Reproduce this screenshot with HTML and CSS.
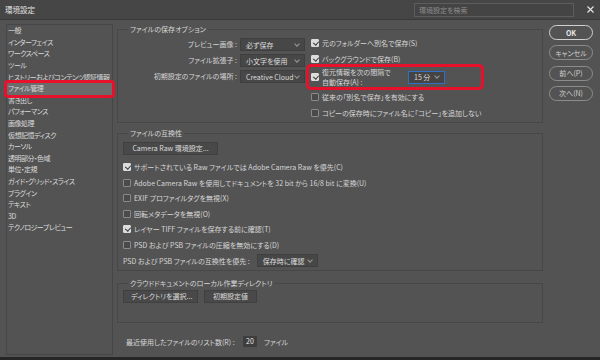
FILE: index.html
```html
<!DOCTYPE html>
<html lang="ja">
<head>
  <meta charset="UTF-8">
  <title>環境設定</title>
  <link rel="stylesheet" href="styles.css">
</head>
<body>
<div class="window">
  <div class="titlebar">
    <span class="title">環境設定</span>
    <div class="search">環境設定を検索</div>
    <svg class="close" width="7" height="7" viewBox="0 0 7 7"><path d="M0.5 0.5L6.5 6.5M6.5 0.5L0.5 6.5" stroke="#e2e2e2" stroke-width="1.2"/></svg>
  </div>

  <div class="content">
    <!-- 左のカテゴリ一覧 -->
    <ul class="sidebar">
      <li>一般</li>
      <li>インターフェイス</li>
      <li>ワークスペース</li>
      <li>ツール</li>
      <li>ヒストリーおよびコンテンツ認証情報</li>
      <li class="selected">ファイル管理</li>
      <li>書き出し</li>
      <li>パフォーマンス</li>
      <li>画像処理</li>
      <li>仮想記憶ディスク</li>
      <li>カーソル</li>
      <li>透明部分・色域</li>
      <li>単位・定規</li>
      <li>ガイド・グリッド・スライス</li>
      <li>プラグイン</li>
      <li>テキスト</li>
      <li>3D</li>
      <li>テクノロジープレビュー</li>
    </ul>

    <div class="main">
      <fieldset class="frame frame-save">
        <legend>ファイルの保存オプション</legend>
        <div class="save-grid">
          <div class="fields">
            <label>プレビュー画像 :</label>
            <div class="select">必ず保存</div>
            <label>ファイル拡張子 :</label>
            <div class="select">小文字を使用</div>
            <label>初期設定のファイルの場所 :</label>
            <div class="select">Creative Cloud</div>
          </div>
          <div class="checks">
            <div class="check-row"><span class="box on"></span>元のフォルダーへ別名で保存(S)</div>
            <div class="check-row"><span class="box on"></span>バックグラウンドで保存(B)</div>
            <div class="check-row marked">
              <span class="box on"></span>
              <span class="two-lines">復元情報を次の間隔で<br>自動保存(A) :</span>
              <div class="select select-focus">15 分</div>
            </div>
            <div class="check-row"><span class="box"></span>従来の「別名で保存」を有効にする</div>
            <div class="check-row"><span class="box"></span>コピーの保存時にファイル名に「コピー」を追加しない</div>
          </div>
        </div>
      </fieldset>

      <fieldset class="frame frame-compat">
        <legend>ファイルの互換性</legend>
        <div class="btn btn-camera">Camera Raw 環境設定...</div>
        <div class="compat-list">
          <div class="check-row"><span class="box on"></span>サポートされている Raw ファイルでは Adobe Camera Raw を優先(C)</div>
          <div class="check-row"><span class="box"></span>Adobe Camera Raw を使用してドキュメントを 32 bit から 16/8 bit に変換(U)</div>
          <div class="check-row"><span class="box"></span>EXIF プロファイルタグを無視(X)</div>
          <div class="check-row"><span class="box"></span>回転メタデータを無視(O)</div>
          <div class="check-row"><span class="box on"></span>レイヤー TIFF ファイルを保存する前に確認(T)</div>
          <div class="check-row"><span class="box"></span>PSD および PSB ファイルの圧縮を無効にする(D)</div>
        </div>
        <div class="psd-row">
          <label>PSD および PSB ファイルの互換性を優先 :</label>
          <div class="select select-psd">保存時に確認</div>
        </div>
      </fieldset>

      <fieldset class="frame frame-cloud">
        <legend>クラウドドキュメントのローカル作業ディレクトリ</legend>
        <div class="btn-row">
          <div class="btn btn-dir">ディレクトリを選択...</div>
          <div class="btn btn-default">初期設定値</div>
        </div>
      </fieldset>

      <div class="recent">
        <label>最近使用したファイルのリスト数(R) :</label>
        <div class="num">20</div>
        <span>ファイル</span>
      </div>
    </div>

    <div class="actions">
      <div class="round-btn ok">OK</div>
      <div class="round-btn">キャンセル</div>
      <div class="round-btn">前へ(P)</div>
      <div class="round-btn">次へ(N)</div>
    </div>
  </div>
</div>
</body>
</html>
```

FILE: styles.css
```css
* {
  box-sizing: border-box;
}

body {
  margin: 0;
  background-color: #262626;
  font-family: "Noto Sans CJK JP", "Noto Sans", sans-serif;
  font-size: 7px;
  font-feature-settings: "palt";
  color: #d6d6d6;
}

.window {
  width: 600px;
  height: 357px;
  background-color: #535353;
  display: flex;
  flex-direction: column;
}

/* タイトルバー */
.titlebar {
  height: 20px;
  flex: none;
  display: flex;
  align-items: center;
  padding: 0 6px 0 5px;
  background-color: #464646;
  border-bottom: 1px solid #3a3a3a;
}

.title {
  font-size: 7.5px;
  color: #e2e2e2;
}

.search {
  margin-left: auto;
  width: 160px;
  height: 14px;
  padding-left: 4px;
  line-height: 12px;
  border: 1px solid #5d5d5d;
  background-color: #444444;
  color: #8c8c8c;
}

.close {
  margin-left: 13px;
}

.content {
  flex: 1;
  display: flex;
  padding: 4px 0 2px 6px;
  min-height: 0;
}

/* 左のリスト */
.sidebar {
  width: 107px;
  margin: 0;
  padding: 0.2px 0 0;
  list-style: none;
  border: 1px solid #464646;
}

.sidebar li {
  height: 11.6px;
  line-height: 11.6px;
  padding-left: 1px;
  white-space: nowrap;
  letter-spacing: -0.5px;
  color: #dadada;
}

.sidebar .selected {
  background-color: #6b6b6b;
  outline: 3px solid #e8112c;
  border-radius: 1px;
}

/* 中央 */
.main {
  width: 426px;
  margin-left: 4px;
  display: flex;
  flex-direction: column;
}

.frame {
  margin: 0;
  padding: 0 5px;
  border: 1px solid #474747;
  min-width: 0;
}

.frame legend {
  margin-left: 5px;
  padding: 0 2px;
  line-height: 10px;
  color: #d6d6d6;
}

.frame-save {
  padding-bottom: 1px;
}

.save-grid {
  display: flex;
  align-items: flex-start;
}

.fields {
  display: grid;
  grid-template-columns: 114px 65px;
  grid-auto-rows: 13px;
  column-gap: 3px;
  row-gap: 3px;
  padding-top: 4px;
}

.fields label {
  text-align: right;
  line-height: 13px;
  white-space: nowrap;
}

.select {
  display: flex;
  align-items: center;
  height: 13px;
  padding: 0 5px 0 5px;
  background-color: #474747;
  border: 1px solid #3f3f3f;
  color: #dcdcdc;
  white-space: nowrap;
}

.select::after {
  content: "";
  width: 3px;
  height: 3px;
  margin-left: auto;
  margin-top: -2px;
  border-right: 1px solid #9a9a9a;
  border-bottom: 1px solid #9a9a9a;
  transform: rotate(45deg);
}

.select-focus {
  width: 37px;
  margin-left: 3px;
  border-color: #2f6fc6;
  background-color: #444444;
}

.select-psd {
  width: 61px;
}

.checks {
  display: flex;
  flex-direction: column;
  margin-left: 4px;
  padding-top: 1px;
}

.check-row {
  display: flex;
  align-items: center;
  gap: 3px;
  height: 16px;
  white-space: nowrap;
}

.checks .check-row {
  padding-left: 2px;
}

.check-row.marked {
  width: 172px;
  height: 20px;
  margin-bottom: 2px;
  outline: 3px solid #e8112c;
  border-radius: 2px;
}

.two-lines {
  width: 80px;
  line-height: 10px;
}

.box {
  flex: none;
  position: relative;
  width: 8px;
  height: 8px;
  border: 1px solid #8a8a8a;
  border-radius: 1px;
  background-color: #4a4a4a;
}

.box.on {
  border-color: #dcdcdc;
  background-color: #dcdcdc;
}

.box.on::after {
  content: "";
  position: absolute;
  left: 1.5px;
  top: 0;
  width: 2.5px;
  height: 4px;
  border-right: 1.3px solid #333333;
  border-bottom: 1.3px solid #333333;
  transform: rotate(40deg);
}

/* ボタン */
.btn {
  height: 13px;
  line-height: 11px;
  padding: 0 7px;
  border: 1px solid #404040;
  background-color: #494949;
  color: #dcdcdc;
  text-align: center;
  white-space: nowrap;
}

.btn-camera {
  width: 95px;
  margin-top: 4px;
}

.compat-list {
  margin-top: 4.5px;
}

.compat-list .check-row {
  height: 15.5px;
}

.psd-row {
  display: flex;
  align-items: center;
  gap: 7px;
  margin-top: 1.5px;
  padding-bottom: 3px;
}

.frame-compat {
  margin-top: 5px;
}

.frame-cloud {
  margin-top: 7px;
  padding-bottom: 19px;
}

.btn-row {
  display: flex;
  gap: 6px;
  margin-top: 2px;
}

.btn-dir {
  width: 75px;
}

.btn-default {
  width: 53px;
}

.recent {
  display: flex;
  align-items: center;
  height: 11px;
  margin-top: 13px;
  padding-left: 9px;
}

.recent label {
  width: 117px;
  white-space: nowrap;
}

.num {
  width: 14px;
  height: 11px;
  line-height: 11px;
  margin-right: 7px;
  text-align: center;
  background-color: #3e3e3e;
  color: #e6e6e6;
}

/* 右のボタン */
.actions {
  width: 44px;
  margin-left: 6px;
  padding-top: 1px;
  display: flex;
  flex-direction: column;
  gap: 5.3px;
}

.round-btn {
  height: 15px;
  display: flex;
  align-items: center;
  justify-content: center;
  border: 1px solid #8c8c8c;
  border-radius: 8px;
  color: #d2d2d2;
}

.round-btn.ok {
  border: 1.5px solid #d0d0d0;
  font-weight: bold;
  color: #e6e6e6;
}
```
